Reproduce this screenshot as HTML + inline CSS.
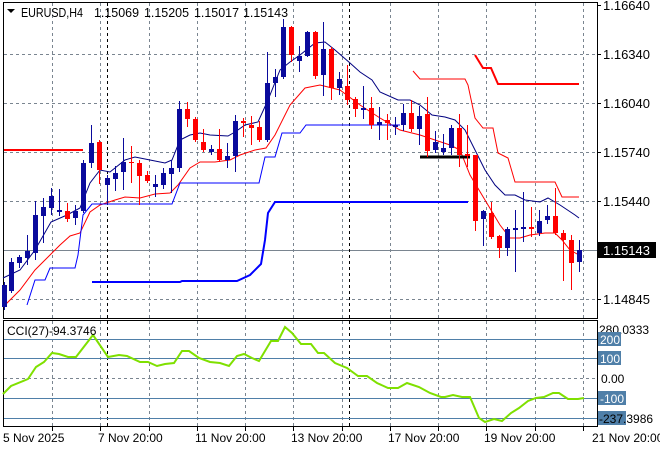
<!DOCTYPE html>
<html><head><meta charset="utf-8"><style>
html,body{margin:0;padding:0;background:#fff;width:660px;height:450px;overflow:hidden}
svg{display:block;font-family:"Liberation Sans",sans-serif;font-size:12px}
.b{font-size:13px}
</style></head><body>
<svg id="s" width="660" height="450" xmlns="http://www.w3.org/2000/svg">
<rect width="660" height="450" fill="#fff"/>
<g id="grid" stroke="#7a8590" stroke-width="1" stroke-dasharray="3,3" fill="none"></g>
<rect x="3.5" y="2.5" width="594" height="316" fill="none" stroke="#000"/>
<rect x="3.5" y="320.5" width="594" height="106" fill="none" stroke="#000"/>
<line x1="4" y1="250.5" x2="597" y2="250.5" stroke="#7a8590"/>
<line x1="107.5" y1="3" x2="107.5" y2="426" stroke="#000" stroke-dasharray="3,3"/>
<line x1="349.5" y1="3" x2="349.5" y2="426" stroke="#000" stroke-dasharray="3,3"/>
<g stroke="#4f7fa8" stroke-width="1">
<line x1="4" y1="339.5" x2="597" y2="339.5"/>
<line x1="4" y1="358.5" x2="597" y2="358.5"/>
<line x1="4" y1="398.5" x2="597" y2="398.5"/>
<line x1="4" y1="418.5" x2="597" y2="418.5"/>
</g>
<line x1="4" y1="378.5" x2="597" y2="378.5" stroke="#7a8590" stroke-dasharray="3,3"/>
<g id="ind" fill="none"></g>
<g id="cdl"></g>
<polyline fill="none" stroke="#7fe000" stroke-width="2" points="3,394 11,386 28,379 36,367 44,362 52,353 59,354 68,357 76,357 93,335 108,357 119,355 127,356 140,362 148,362 157,366 165,364 174,363 182,351 189,351 199,358 210,362 220,363 229,366 237,356 244,354 252,358 259,361 271,341 278,341 285,327 292,333 301,344 311,344 318,353 324,353 335,363 347,368 358,376 367,376 377,383 388,388 398,388 407,383 419,387 430,393 441,397 445,397 453,395 462,397 470,397 479,418 485,422 494,419 502,421 511,413 519,408 528,401 536,398 544,397 553,393 559,393 568,399 578,399 584,398"/>
<path d="M7,9 L15,9 L11,13 Z" fill="#000"/>
<g fill="#000" class="b">
<text x="21" y="17" textLength="62" lengthAdjust="spacingAndGlyphs">EURUSD,H4</text>
<text x="94" y="17" textLength="45" lengthAdjust="spacingAndGlyphs">1.15069</text>
<text x="144" y="17" textLength="45" lengthAdjust="spacingAndGlyphs">1.15205</text>
<text x="194" y="17" textLength="45" lengthAdjust="spacingAndGlyphs">1.15017</text>
<text x="243" y="17" textLength="45" lengthAdjust="spacingAndGlyphs">1.15143</text>
</g>
<g fill="#000">
<text x="7" y="335">CCI(27)</text>
<text x="49" y="335">-94.3746</text>
</g>
<g fill="#000" class="b">
<text x="603" y="10">1.16640</text>
<text x="603" y="59">1.16340</text>
<text x="603" y="108">1.16040</text>
<text x="603" y="157">1.15740</text>
<text x="603" y="206">1.15440</text>
<text x="603" y="304">1.14845</text>
</g>
<g stroke="#000"><line x1="597" y1="5.5" x2="601" y2="5.5"/><line x1="597" y1="54.5" x2="601" y2="54.5"/><line x1="597" y1="103.5" x2="601" y2="103.5"/><line x1="597" y1="152.5" x2="601" y2="152.5"/><line x1="597" y1="201.5" x2="601" y2="201.5"/><line x1="597" y1="299.5" x2="601" y2="299.5"/></g>
<rect x="598" y="242" width="58" height="16" fill="#000"/>
<text x="603" y="255" fill="#fff" class="b">1.15143</text>
<text x="599" y="334" fill="#000">280.0333</text>
<rect x="598" y="332" width="23" height="14" fill="#4f7fa8"/><text x="600" y="344" fill="#fff">200</text>
<rect x="598" y="351" width="23" height="14" fill="#4f7fa8"/><text x="600" y="363" fill="#fff">100</text>
<text x="601" y="383" fill="#000">0.00</text>
<rect x="598" y="391" width="28" height="14" fill="#4f7fa8"/><text x="600" y="403" fill="#fff">-100</text>
<rect x="598" y="411" width="28" height="14" fill="#4f7fa8"/><text x="599" y="423" fill="#000">-237.3986</text>
<g id="ticks" stroke="#000"></g>
<g fill="#000">
<text x="3" y="442">5 Nov 2025</text>
<text x="98" y="442">7 Nov 20:00</text>
<text x="195" y="442">11 Nov 20:00</text>
<text x="291" y="442">13 Nov 20:00</text>
<text x="388" y="442">17 Nov 20:00</text>
<text x="484" y="442">19 Nov 20:00</text>
<text x="592" y="442">21 Nov 20:00</text>
</g>
</svg>
<script>
var NS="http://www.w3.org/2000/svg";
function el(p,t,a){var e=document.createElementNS(NS,t);for(var k in a)e.setAttribute(k,a[k]);document.getElementById(p).appendChild(e);return e;}
var vx=[52,100,149,197,245,293,342,390,438,486,535,583];
vx.forEach(function(x){el("grid","line",{x1:x+.5,y1:3,x2:x+.5,y2:318});el("grid","line",{x1:x+.5,y1:321,x2:x+.5,y2:426});el("ticks","line",{x1:x+.5,y1:427,x2:x+.5,y2:431});});
[54,103,152,201,299].forEach(function(y){el("grid","line",{x1:4,y1:y+.5,x2:597,y2:y+.5});});
function pl(pts,c,w){el("ind","polyline",{points:pts,stroke:c,"stroke-width":w});}
pl("3,278 20,270 35,250 51,222 67,215 80,208 90,183 100,170 110,172 125,160 135,157 150,160 165,163 172,160 180,140 190,135 200,133 210,135 228,136 235,132 245,125 258,122 268,100 280,70 290,62 300,55 315,43 325,42 335,50 350,63 360,72 372,80 380,92 398,100 410,100 420,105 432,115 445,117 455,120 465,130 475,150 485,170 495,185 505,195 515,195 525,200 540,202 548,198 560,205 575,215 579,218","#000080",1);
pl("3,307 20,290 35,270 50,255 60,245 70,236 80,233 90,212 100,205 115,200 125,197 140,198 155,194 170,193 178,185 190,168 200,162 215,162 230,160 240,155 255,150 266,148 275,135 290,105 305,88 320,85 340,90 360,105 380,118 400,130 420,135 435,140 450,145 460,150 470,175 485,200 500,225 510,238 520,238 530,235 545,233 555,233 562,240 570,250 579,255","#ff0000",1);
pl("4,150 83,150","#ff0000",2);
pl("413,71 420,79 465,79 468,85 475,118 483,128 493,128 498,153 508,158 515,182 555,182 562,197 579,197","#ff0000",1);
pl("475,55 483,68 491,68 498,84 579,84","#ff0000",2);
pl("27,305 35,280 45,280 50,268 75,268 78,255 83,215 92,204 172,204 180,183 259,183 265,157 275,157 282,133 300,133 306,125 400,125","#0000ff",1);
pl("92,282 180,282 182,281 237,281 250,275 261,264 265,240 268,213 275,202 468,202","#0000ff",2);
pl("420,157 470,157","#000",3);
var B="#0a0a9c",R="#ff0000";
var c=[[4,282,285,307,310,B],[11,258,262,291,293,B],[19,255,257,263,268,B],[27,235,251,258,265,B],[35,201,215,253,260,B],[43,198,207,216,243,B],[51,188,196,208,215,B],[59,189,210,212,216,B],[67,203,211,219,222,R],[75,205,211,218,225,B],[83,160,163,211,213,B],[91,125,143,163,168,B],[99,140,142,170,184,R],[107,175,178,185,205,B],[115,166,173,179,191,B],[123,138,162,172,190,B],[131,146,162,163,183,R],[139,160,163,176,205,R],[147,171,175,181,183,R],[155,175,184,187,197,B],[163,168,173,185,189,B],[171,160,168,174,193,B],[179,101,109,168,172,B],[187,102,109,119,127,R],[195,117,119,140,142,R],[203,129,142,150,152,R],[211,145,149,152,155,B],[219,129,149,160,162,R],[227,143,156,160,168,B],[235,115,121,156,172,B],[243,118,121,123,137,R],[251,116,125,128,145,R],[259,121,127,140,142,R],[267,52,83,140,142,B],[275,69,77,83,97,B],[283,19,27,77,79,B],[291,26,27,55,62,R],[299,46,56,61,72,B],[307,31,32,56,57,B],[315,31,32,76,79,R],[323,22,49,75,96,B],[331,47,49,88,100,R],[339,72,79,88,95,B],[347,65,86,100,105,R],[355,97,99,109,117,R],[363,86,108,110,119,B],[371,97,108,125,129,R],[379,107,122,125,140,B],[387,114,120,123,140,R],[395,117,125,127,135,B],[403,104,113,125,131,B],[411,100,113,129,132,R],[419,106,116,129,145,B],[427,97,114,151,157,R],[435,131,142,150,153,B],[443,134,148,152,155,B],[451,125,128,148,155,B],[459,114,128,155,167,R],[467,125,154,156,167,R],[475,155,155,221,231,R],[483,210,211,219,246,B],[491,202,213,237,239,R],[499,235,236,248,258,R],[507,227,229,248,256,B],[515,210,228,230,272,B],[523,192,227,229,242,B],[531,207,227,229,237,R],[539,210,221,233,236,B],[547,205,216,220,224,B],[555,188,216,233,235,R],[563,230,233,240,281,R],[571,235,240,263,290,R],[579,240,250,262,272,B]];
c.forEach(function(d){el("cdl","line",{x1:d[0]+.5,y1:d[1],x2:d[0]+.5,y2:d[4],stroke:d[5]});el("cdl","rect",{x:d[0]-2,y:d[2],width:5,height:Math.max(1,d[3]-d[2]),fill:d[5]});});
</script>
</body></html>
